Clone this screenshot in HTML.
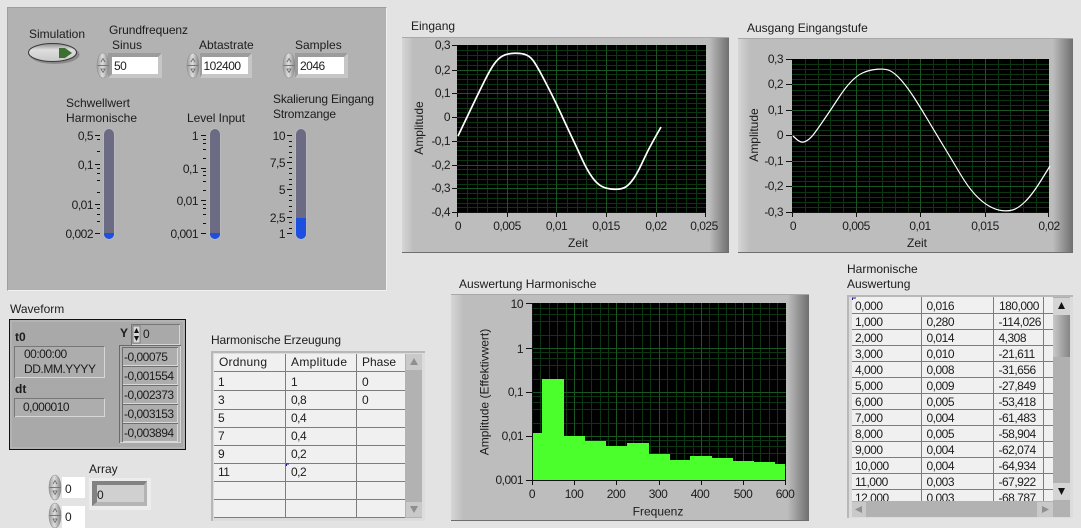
<!DOCTYPE html>
<html>
<head>
<meta charset="utf-8">
<title>LabVIEW Panel</title>
<style>
html,body{margin:0;padding:0;background:#e3e3e3;width:1081px;height:528px;overflow:hidden}
svg{display:block;position:absolute;left:0;top:0}
text{font-family:"Liberation Sans",sans-serif;font-size:12px;fill:#1c1c1c}
.e{text-anchor:end}
.m{text-anchor:middle}
.b{font-weight:bold}
.n text{letter-spacing:-.5px}
.min{fill:none;stroke:#0b3611;stroke-width:1;shape-rendering:crispEdges}
.maj{fill:none;stroke:#185722;stroke-width:1;shape-rendering:crispEdges}
.tick{fill:none;stroke:#111;stroke-width:1;shape-rendering:crispEdges}
.grid{fill:none;stroke:#7d7d7d;stroke-width:1;shape-rendering:crispEdges}
</style>
</head>
<body>
<svg width="1081" height="528" viewBox="0 0 1081 528" xmlns="http://www.w3.org/2000/svg">
<defs>
<linearGradient id="fr" x1="0" x2="1" y1="0" y2="0">
<stop offset="0" stop-color="#d6d6d6"/><stop offset=".035" stop-color="#bdbdbd"/><stop offset=".94" stop-color="#bdbdbd"/><stop offset="1" stop-color="#6e6e6e"/>
</linearGradient>
<linearGradient id="sp" x1="0" x2="1" y1="0" y2="0">
<stop offset="0" stop-color="#9a9a9a"/><stop offset=".45" stop-color="#dedede"/><stop offset="1" stop-color="#858585"/>
</linearGradient>
<linearGradient id="th" x1="0" x2="1" y1="0" y2="0">
<stop offset="0" stop-color="#c8c8c8"/><stop offset="1" stop-color="#858585"/>
</linearGradient>
<linearGradient id="btn" x1="0" x2="0" y1="0" y2="1">
<stop offset="0" stop-color="#8d8d8d"/><stop offset=".35" stop-color="#dedede"/><stop offset="1" stop-color="#c9c9c9"/>
</linearGradient>
<g id="spin">
<ellipse cx="6" cy="12.5" rx="6" ry="12.5" fill="url(#sp)" stroke="#8f8f8f" stroke-width=".6"/>
<path d="M0.5 12.5H11.5" stroke="#777" stroke-width="1"/>
<path d="M4 9L6 5.5L8 9" fill="none" stroke="#666" stroke-width=".8"/>
<path d="M4 16L6 19.5L8 16Z" fill="none" stroke="#666" stroke-width=".8"/>
</g>
</defs>

<!-- Top-left control panel -->
<rect x="7" y="7" width="380" height="284" fill="#f0f0f0"/>
<path d="M7 7H387L384 10H10V288L7 291Z" fill="#9e9e9e"/>
<rect x="8" y="8" width="378" height="282" fill="#b2b2b2"/>

<text x="29" y="38">Simulation</text>
<ellipse cx="54.500" cy="54.500" rx="25" ry="9.500" fill="#8a8a8a"/>
<ellipse cx="52.500" cy="52.500" rx="24" ry="9" fill="url(#btn)" stroke="#3a3a3a" stroke-width="1"/>
<path d="M59 48H65L72 53L65 58H59Z" fill="#3d6f33"/>

<text x="109" y="34" textLength="79">Grundfrequenz</text>
<text x="112" y="49">Sinus</text>
<text x="199" y="49">Abtastrate</text>
<text x="295" y="49">Samples</text>

<rect x="108" y="53" width="54" height="25" fill="#c6c6c6"/><path d="M108 53H162L158 57H112V74L108 78Z" fill="#9c9c9c"/><rect x="112" y="57" width="46" height="17" fill="#fff"/>
<use href="#spin" x="97" y="53"/>
<rect x="200" y="53" width="52" height="25" fill="#c6c6c6"/><path d="M200 53H252L248 57H202V74L200 78Z" fill="#9c9c9c"/><rect x="202" y="57" width="46" height="17" fill="#fff"/>
<use href="#spin" x="187" y="53"/>
<rect x="295" y="53" width="53" height="25" fill="#c6c6c6"/><path d="M295 53H348L344 57H298V74L295 78Z" fill="#9c9c9c"/><rect x="298" y="57" width="46" height="17" fill="#fff"/>
<use href="#spin" x="283" y="53"/>
<g class="n">
<text x="114" y="70">50</text>
<text x="203.500" y="70">102400</text>
<text x="300" y="70">2046</text>
</g>

<text x="66" y="107">Schwellwert</text>
<text x="66" y="122" textLength="71">Harmonische</text>
<text x="187" y="122" textLength="58">Level Input</text>
<text x="273" y="103" textLength="101">Skalierung Eingang</text>
<text x="273" y="118" textLength="63">Stromzange</text>

<!-- Slider 1 -->
<rect x="103.500" y="128.500" width="11" height="111" rx="5" fill="#c0c0c8"/>
<rect x="104" y="129" width="10" height="110" rx="5" fill="#6b6b84"/>
<path d="M104 233H114V234A5 5 0 0 1 104 234Z" fill="#1d50e0"/>
<path class="tick" d="M95 135.500H100M97 139.500H100M97 151.500H100M95 164.500H100M97 168.500H100M97 173.500H100M97 180.500H100M97 192.500H100M95 204.500H100M97 208.500H100M97 214.500H100M97 221.500H100M95 233.500H100"/>
<g class="n">
<text class="e" x="93" y="140">0,5</text>
<text class="e" x="93" y="169">0,1</text>
<text class="e" x="93" y="209">0,01</text>
<text class="e" x="93" y="238">0,002</text>
</g>

<!-- Slider 2 -->
<rect x="209.500" y="128.500" width="11" height="111" rx="5" fill="#c0c0c8"/>
<rect x="210" y="129" width="10" height="110" rx="5" fill="#6b6b84"/>
<path d="M210 233H220V234A5 5 0 0 1 210 234Z" fill="#1d50e0"/>
<path class="tick" d="M201 135.500H206M203 139.500H206M203 143.500H206M203 149.500H206M203 158.500H206M201 168.500H206M203 171.500H206M203 175.500H206M203 181.500H206M203 190.500H206M201 200.500H206M203 204.500H206M203 208.500H206M203 214.500H206M203 223.500H206M201 233.500H206"/>
<g class="n">
<text class="e" x="198" y="140">1</text>
<text class="e" x="198" y="173">0,1</text>
<text class="e" x="198" y="205">0,01</text>
<text class="e" x="198" y="238">0,001</text>
</g>

<!-- Slider 3 -->
<rect x="295.500" y="128.500" width="11" height="111" rx="5" fill="#c0c0c8"/>
<rect x="296" y="129" width="10" height="110" rx="5" fill="#6b6b84"/>
<path d="M296 218H306V234A5 5 0 0 1 296 234Z" fill="#1d50e0"/>
<path class="tick" d="M287 135.500H292M289 141.500H292M289 146.500H292M289 152.500H292M289 157.500H292M287 162.500H292M289 168.500H292M289 173.500H292M289 179.500H292M289 184.500H292M287 189.500H292M289 195.500H292M289 200.500H292M289 206.500H292M289 211.500H292M287 217.500H292M289 222.500H292M289 228.500H292M287 233.500H292"/>
<g class="n">
<text class="e" x="285" y="140">10</text>
<text class="e" x="285" y="167">7,5</text>
<text class="e" x="285" y="194">5</text>
<text class="e" x="285" y="222">2,5</text>
<text class="e" x="285" y="238">1</text>
</g>

<!-- Plot 1 -->
<text x="411" y="30">Eingang</text>
<rect x="402" y="37" width="327" height="216" fill="url(#fr)"/>
<path d="M402 37H729V38H402Z" fill="#a8a8a8"/>
<path d="M402 252H729V253H402Z" fill="#6e6e6e"/>
<rect x="457" y="45" width="249" height="167" fill="#000"/>
<path class="min" d="M467.500 45V212M477.500 45V212M487.500 45V212M497.500 45V212M517.500 45V212M527.500 45V212M537.500 45V212M547.500 45V212M567.500 45V212M577.500 45V212M586.500 45V212M596.500 45V212M616.500 45V212M626.500 45V212M636.500 45V212M646.500 45V212M666.500 45V212M676.500 45V212M686.500 45V212M696.500 45V212M457 50.500H706M457 55.500H706M457 60.500H706M457 65.500H706M457 74.500H706M457 79.500H706M457 84.500H706M457 89.500H706M457 98.500H706M457 103.500H706M457 108.500H706M457 112.500H706M457 122.500H706M457 127.500H706M457 131.500H706M457 136.500H706M457 146.500H706M457 150.500H706M457 155.500H706M457 160.500H706M457 169.500H706M457 174.500H706M457 179.500H706M457 184.500H706M457 193.500H706M457 198.500H706M457 203.500H706M457 207.500H706"/>
<path class="maj" d="M507.500 45V212M556.500 45V212M606.500 45V212M656.500 45V212M457 70.500H706M457 93.500H706M457 117.500H706M457 141.500H706M457 165.500H706M457 188.500H706"/>
<path class="tick" d="M452 45.500H457M452 70.500H457M452 93.500H457M452 117.500H457M452 141.500H457M452 165.500H457M452 188.500H457M452 212.500H457M457.500 212V217M507.500 212V217M556.500 212V217M606.500 212V217M656.500 212V217M705.500 212V217M457 212.500H706"/>
<path fill="none" stroke="#fff" stroke-width="1.700" stroke-linejoin="round" d="M458 136L463 125.500Q468 115 474 102.500Q480 90 485 80Q490 70 494 64.250Q498 58.500 502.500 56Q507 53.500 514.500 53.250Q522 53 526.500 55Q531 57 534.500 62.500Q538 68 542.500 76.500Q547 85 552 95Q557 105 562 116Q567 127 572 137.500Q577 148 582 159Q587 170 592 177Q597 184 602 186.500Q607 189 614.500 189.250Q622 189.500 626 186.750Q630 184 634 178Q638 172 643 161Q648 150 654.500 138.500L661 127"/>
<g class="n">
<text class="e" x="450" y="49">0,3</text>
<text class="e" x="450" y="74">0,2</text>
<text class="e" x="450" y="97">0,1</text>
<text class="e" x="450" y="121">0</text>
<text class="e" x="450" y="145">-0,1</text>
<text class="e" x="450" y="169">-0,2</text>
<text class="e" x="450" y="192">-0,3</text>
<text class="e" x="450" y="216">-0,4</text>
<text class="m" x="458" y="230">0</text>
<text class="m" x="507" y="230">0,005</text>
<text class="m" x="556.500" y="230">0,01</text>
<text class="m" x="606" y="230">0,015</text>
<text class="m" x="656" y="230">0,02</text>
<text class="m" x="704" y="230">0,025</text>
</g>
<text class="m" x="578" y="247">Zeit</text>
<text class="m" transform="translate(423 128) rotate(-90)">Amplitude</text>

<!-- Plot 2 -->
<text x="747" y="32">Ausgang Eingangstufe</text>
<rect x="738" y="38" width="335" height="215" fill="url(#fr)"/>
<path d="M738 38H1073V39H738Z" fill="#a8a8a8"/>
<path d="M738 252H1073V253H738Z" fill="#6e6e6e"/>
<rect x="792" y="59" width="257" height="153" fill="#000"/>
<path class="min" d="M805.500 59V212M818.500 59V212M830.500 59V212M843.500 59V212M869.500 59V212M882.500 59V212M895.500 59V212M908.500 59V212M933.500 59V212M946.500 59V212M959.500 59V212M972.500 59V212M998.500 59V212M1010.500 59V212M1023.500 59V212M1036.500 59V212M792 64.500H1049M792 69.500H1049M792 74.500H1049M792 79.500H1049M792 90.500H1049M792 95.500H1049M792 100.500H1049M792 105.500H1049M792 115.500H1049M792 120.500H1049M792 125.500H1049M792 130.500H1049M792 141.500H1049M792 146.500H1049M792 151.500H1049M792 156.500H1049M792 166.500H1049M792 171.500H1049M792 176.500H1049M792 181.500H1049M792 192.500H1049M792 197.500H1049M792 202.500H1049M792 207.500H1049"/>
<path class="maj" d="M856.500 59V212M920.500 59V212M985.500 59V212M792 84.500H1049M792 110.500H1049M792 135.500H1049M792 161.500H1049M792 186.500H1049"/>
<path class="tick" d="M786 59.500H792M786 84.500H792M786 110.500H792M786 135.500H792M786 161.500H792M786 186.500H792M786 212.500H792M792.500 212V217M856.500 212V217M920.500 212V217M985.500 212V217M1048.500 212V217M792 212.500H1049"/>
<path fill="none" stroke="#fff" stroke-width="1.200" stroke-linejoin="round" d="M793 136L796 138.750Q799 141.500 801.500 142Q804 142.500 807.500 140.250Q811 138 815 132.500Q819 127 825.500 117.500Q832 108 838.500 98Q845 88 851 81.750Q857 75.500 863 72.750Q869 70 877 69.250Q885 68.500 890 70.750Q895 73 901.500 80.500Q908 88 915 99Q922 110 928.500 121Q935 132 943.500 146Q952 160 960 173.500Q968 187 975 194.500Q982 202 988.500 205.750Q995 209.500 1001 210.500Q1007 211.500 1012.500 210Q1018 208.500 1025 201.750Q1032 195 1041 180.500L1050 166"/>
<g class="n">
<text class="e" x="783" y="63">0,3</text>
<text class="e" x="783" y="88">0,2</text>
<text class="e" x="783" y="114">0,1</text>
<text class="e" x="783" y="139">0</text>
<text class="e" x="783" y="165">-0,1</text>
<text class="e" x="783" y="190">-0,2</text>
<text class="e" x="783" y="216">-0,3</text>
<text class="m" x="793" y="230">0</text>
<text class="m" x="856" y="230">0,005</text>
<text class="m" x="920" y="230">0,01</text>
<text class="m" x="985" y="230">0,015</text>
<text class="m" x="1049" y="230">0,02</text>
</g>
<text class="m" x="917" y="247">Zeit</text>
<text class="m" transform="translate(758 135) rotate(-90)">Amplitude</text>

<!-- Plot 3 -->
<text x="459" y="288">Auswertung Harmonische</text>
<rect x="451" y="294" width="358" height="227" fill="url(#fr)"/>
<path d="M451 294H809V295H451Z" fill="#a8a8a8"/>
<path d="M451 520H809V521H451Z" fill="#6e6e6e"/>
<rect x="532" y="303" width="254" height="177" fill="#000"/>
<path class="min" d="M540.500 303V480M549.500 303V480M557.500 303V480M566.500 303V480M582.500 303V480M591.500 303V480M600.500 303V480M608.500 303V480M625.500 303V480M633.500 303V480M642.500 303V480M650.500 303V480M667.500 303V480M676.500 303V480M684.500 303V480M693.500 303V480M709.500 303V480M718.500 303V480M726.500 303V480M735.500 303V480M752.500 303V480M760.500 303V480M769.500 303V480M777.500 303V480M532 308.500H786M532 314.500H786M532 321.500H786M532 335.500H786M532 352.500H786M532 358.500H786M532 365.500H786M532 379.500H786M532 396.500H786M532 402.500H786M532 409.500H786M532 423.500H786M532 440.500H786M532 446.500H786M532 453.500H786M532 467.500H786"/>
<path class="maj" d="M574.500 303V480M616.500 303V480M659.500 303V480M701.500 303V480M743.500 303V480M532 348.500H786M532 392.500H786M532 436.500H786"/>
<polygon fill="#4bff2c" points="532,480 532,433 542,433 542,379 564,379 564,436 585,436 585,441 606,441 606,446 627,446 627,443 649,443 649,454 670,454 670,460 690,460 690,456 712,456 712,458 733,458 733,461 754,461 754,462 775,462 775,464 785,464 785,480"/>
<path class="tick" d="M526 303.500H532M526 348.500H532M526 392.500H532M526 436.500H532M526 480.500H532M532.500 480V485M574.500 480V485M616.500 480V485M659.500 480V485M701.500 480V485M743.500 480V485M785.500 480V485M532 480.500H786M532.500 303V480"/>
<g class="n">
<text class="e" x="523" y="308">10</text>
<text class="e" x="523" y="353">1</text>
<text class="e" x="523" y="396">0,1</text>
<text class="e" x="523" y="440">0,01</text>
<text class="e" x="523" y="484">0,001</text>
<text class="m" x="532" y="498">0</text>
<text class="m" x="574" y="498">100</text>
<text class="m" x="616" y="498">200</text>
<text class="m" x="658" y="498">300</text>
<text class="m" x="700" y="498">400</text>
<text class="m" x="743" y="498">500</text>
<text class="m" x="785" y="498">600</text>
</g>
<text class="m" x="658" y="515.500">Frequenz</text>
<text class="m" transform="translate(488.500 392) rotate(-90)">Amplitude (Effektivwert)</text>

<!-- Waveform -->
<text x="10" y="313">Waveform</text>
<rect x="9.500" y="319.500" width="176" height="130" fill="#a9a9a9" stroke="#111" stroke-width="1"/>
<rect x="11" y="321" width="173" height="127" fill="none" stroke="#bdbdbd" stroke-width="1"/>
<text class="b" x="15" y="341">t0</text>
<rect x="14.500" y="346.500" width="90" height="31" fill="#adadad" stroke="#d6d6d6"/>
<path class="grid" d="M14.500 378V346.500H104.500" style="stroke:#777"/>
<text class="b" x="15" y="393">dt</text>
<rect x="14.500" y="398.500" width="90" height="18" fill="#adadad" stroke="#d6d6d6"/>
<path class="grid" d="M14.500 417V398.500H104.500" style="stroke:#777"/>
<text class="b" x="120" y="337">Y</text>
<rect x="131.500" y="324.500" width="48" height="20" fill="#a9a9a9" stroke="#d6d6d6"/>
<path class="grid" d="M131.500 345V324.500H180" style="stroke:#777"/>
<rect x="133" y="326" width="7" height="17" fill="#d8d8d8" stroke="#555" stroke-width=".6"/>
<path d="M136.500 328L139 333H134ZM136.500 341L139 336H134Z" fill="#111"/>
<rect x="119.500" y="345.500" width="61" height="97" fill="#b0b0b0" stroke="#d6d6d6"/>
<path class="grid" d="M119.500 443V345.500H181" style="stroke:#6a6a6a"/>
<g fill="#adadad" stroke="#d8d8d8">
<rect x="122.500" y="347.500" width="55" height="18"/>
<rect x="122.500" y="366.500" width="55" height="18"/>
<rect x="122.500" y="385.500" width="55" height="18"/>
<rect x="122.500" y="404.500" width="55" height="18"/>
<rect x="122.500" y="423.500" width="55" height="18"/>
</g>
<path class="grid" d="M122.500 366V347.500H178M122.500 385V366.500H178M122.500 404V385.500H178M122.500 423V404.500H178M122.500 442V423.500H178" style="stroke:#6e6e6e"/>
<text x="24" y="373" textLength="72">DD.MM.YYYY</text>
<g class="n">
<text x="24" y="358">00:00:00</text>
<text x="23" y="411">0,000010</text>
<text x="143" y="338">0</text>
<text x="124" y="361">-0,00075</text>
<text x="124" y="380">-0,001554</text>
<text x="124" y="399">-0,002373</text>
<text x="124" y="418">-0,003153</text>
<text x="124" y="437">-0,003894</text>
</g>

<!-- Array -->
<text x="89" y="473">Array</text>
<use href="#spin" x="49" y="475"/>
<use href="#spin" x="49" y="503"/>
<rect x="62" y="477" width="23" height="21" fill="#fff"/>
<rect x="62" y="506" width="23" height="22" fill="#fff"/>
<text x="65" y="493">0</text>
<text x="65" y="521">0</text>
<rect x="89" y="478" width="62" height="32" fill="#ededed"/>
<rect x="92" y="481" width="55" height="25" fill="#b4b4b4"/>
<path d="M92 481H147L144 485H97V502L92 506Z" fill="#828282"/>
<rect x="97" y="485" width="47" height="17" fill="#d0d0d0"/>
<text x="97" y="499">0</text>

<!-- Table 1 -->
<text x="211" y="344" textLength="130">Harmonische Erzeugung</text>
<rect x="211" y="351" width="214" height="170" fill="#dcdcdc"/>
<path d="M211 351H425V353H213V521H211Z" fill="#b8b8b8"/>
<rect x="214" y="354" width="191" height="164" fill="#f0f0f0"/>
<rect x="405" y="354" width="17" height="164" fill="#b2b2b2"/>
<path class="grid" d="M214 371.500H405M214 390.500H405M214 409.500H405M214 427.500H405M214 445.500H405M214 463.500H405M214 481.500H405M214 499.500H405M214 517.500H405M285.500 354V518M356.500 354V518"/>
<rect x="406" y="354" width="16" height="16" fill="#c9c9c9"/>
<path d="M414 358L418 365H410Z" fill="#8f8f8f"/>
<rect x="406" y="502" width="16" height="15" fill="#c9c9c9"/>
<path d="M414 513L418 506H410Z" fill="#8f8f8f"/>
<path d="M286 464H289M286.500 464V466" stroke="#1a1aa0" stroke-width="1" fill="none"/>
<text x="219" y="366" textLength="48">Ordnung</text>
<text x="291" y="366" textLength="56">Amplitude</text>
<text x="362" y="366">Phase</text>
<g class="n">
<text x="218" y="386">1</text><text x="291" y="386">1</text><text x="362" y="386">0</text>
<text x="218" y="404">3</text><text x="291" y="404">0,8</text><text x="362" y="404">0</text>
<text x="218" y="422">5</text><text x="291" y="422">0,4</text>
<text x="218" y="440">7</text><text x="291" y="440">0,4</text>
<text x="218" y="458">9</text><text x="291" y="458">0,2</text>
<text x="218" y="476">11</text><text x="291" y="476">0,2</text>
</g>

<!-- Table 2 -->
<text x="847" y="273">Harmonische</text>
<text x="847" y="288">Auswertung</text>
<rect x="847" y="295" width="226" height="223" fill="#dcdcdc"/>
<path d="M847 295H1073V297H849V518H847Z" fill="#b8b8b8"/>
<svg x="852" y="297" width="201" height="204" viewBox="852 297 201 204">
<rect x="852" y="297" width="201" height="204" fill="#f0f0f0"/>
<path class="grid" d="M852 313.500H1053M852 329.500H1053M852 345.500H1053M852 361.500H1053M852 377.500H1053M852 393.500H1053M852 409.500H1053M852 425.500H1053M852 441.500H1053M852 457.500H1053M852 473.500H1053M852 489.500H1053M921.500 297V501M993.500 297V501M1043.500 297V501"/>
<path d="M852 298H856M852.500 298V300" stroke="#1a1aa0" stroke-width="1" fill="none"/>
<g class="n">
<text x="855" y="310">0,000</text><text x="926.500" y="310">0,016</text><text x="999" y="310">180,000</text>
<text x="855" y="326">1,000</text><text x="926.500" y="326">0,280</text><text x="998.500" y="326">-114,026</text>
<text x="855" y="342">2,000</text><text x="926.500" y="342">0,014</text><text x="998.500" y="342">4,308</text>
<text x="855" y="358">3,000</text><text x="926.500" y="358">0,010</text><text x="998.500" y="358">-21,611</text>
<text x="855" y="374">4,000</text><text x="926.500" y="374">0,008</text><text x="998.500" y="374">-31,656</text>
<text x="855" y="390">5,000</text><text x="926.500" y="390">0,009</text><text x="998.500" y="390">-27,849</text>
<text x="855" y="406">6,000</text><text x="926.500" y="406">0,005</text><text x="998.500" y="406">-53,418</text>
<text x="855" y="422">7,000</text><text x="926.500" y="422">0,004</text><text x="998.500" y="422">-61,483</text>
<text x="855" y="438">8,000</text><text x="926.500" y="438">0,005</text><text x="998.500" y="438">-58,904</text>
<text x="855" y="454">9,000</text><text x="926.500" y="454">0,004</text><text x="998.500" y="454">-62,074</text>
<text x="855" y="470">10,000</text><text x="926.500" y="470">0,004</text><text x="998.500" y="470">-64,934</text>
<text x="855" y="486">11,000</text><text x="926.500" y="486">0,003</text><text x="998.500" y="486">-67,922</text>
<text x="855" y="502">12,000</text><text x="926.500" y="502">0,003</text><text x="998.500" y="502">-68,787</text>
</g>
</svg>
<rect x="1053" y="297" width="17" height="220" fill="#b0b0b0"/>
<rect x="1053" y="298" width="17" height="17" fill="#d4d4d4"/>
<path d="M1061.500 302L1065 309H1058Z" fill="#111"/>
<rect x="1053" y="315" width="17" height="42" fill="url(#th)"/>
<rect x="1053" y="483" width="17" height="17" fill="#d4d4d4"/>
<path d="M1061.500 495L1065 488H1058Z" fill="#111"/>
<rect x="852" y="501" width="218" height="16" fill="#b2b2b2"/>
<rect x="852" y="502" width="14" height="15" fill="#c9c9c9"/>
<path d="M855 509.500L862 506V513Z" fill="#8f8f8f"/>
<rect x="1037" y="502" width="16" height="15" fill="#c9c9c9"/>
<path d="M1049 509.500L1042 506V513Z" fill="#8f8f8f"/>
</svg>
</body>
</html>
